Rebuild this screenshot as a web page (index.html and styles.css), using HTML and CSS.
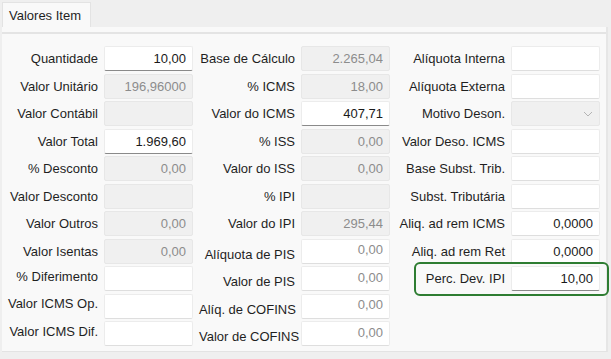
FILE: index.html
```html
<!DOCTYPE html>
<html lang="pt-BR">
  <head>
    <meta charset="UTF-8" />
    <title>Valores Item</title>
    <link rel="stylesheet" href="styles.css">
  </head>
  <body>
    <div class="tabs">
      <div class="tab active">Valores Item</div>
    </div>
    <div class="page">
      <div class="form">
        <div class="col col-1">
          <div class="row"><label>Quantidade</label><input class="field active" value="10,00" readonly></div>
          <div class="row"><label>Valor Unitário</label><input class="field disabled" value="196,96000" readonly></div>
          <div class="row"><label>Valor Contábil</label><input class="field disabled" value="" readonly></div>
          <div class="row"><label>Valor Total</label><input class="field active" value="1.969,60" readonly></div>
          <div class="row"><label>% Desconto</label><input class="field disabled" value="0,00" readonly></div>
          <div class="row"><label>Valor Desconto</label><input class="field disabled" value="" readonly></div>
          <div class="row"><label>Valor Outros</label><input class="field disabled" value="0,00" readonly></div>
          <div class="row"><label>Valor Isentas</label><input class="field disabled" value="0,00" readonly></div>
          <div class="row"><label class="high">% Diferimento</label><input class="field" value="" readonly></div>
          <div class="row"><label class="high">Valor ICMS Op.</label><input class="field" value="" readonly></div>
          <div class="row"><label class="high">Valor ICMS Dif.</label><input class="field" value="" readonly></div>
        </div>

        <div class="col col-2">
          <div class="row"><label>Base de Cálculo</label><input class="field disabled" value="2.265,04" readonly></div>
          <div class="row"><label>% ICMS</label><input class="field disabled" value="18,00" readonly></div>
          <div class="row"><label>Valor do ICMS</label><input class="field active" value="407,71" readonly></div>
          <div class="row"><label>% ISS</label><input class="field disabled" value="0,00" readonly></div>
          <div class="row"><label>Valor do ISS</label><input class="field disabled" value="0,00" readonly></div>
          <div class="row"><label>% IPI</label><input class="field disabled" value="" readonly></div>
          <div class="row"><label>Valor do IPI</label><input class="field disabled" value="295,44" readonly></div>
          <div class="row"><label class="low">Alíquota de PIS</label><input class="field muted" value="0,00" readonly></div>
          <div class="row"><label class="low">Valor de PIS</label><input class="field muted" value="0,00" readonly></div>
          <div class="row"><label class="low">Alíq. de COFINS</label><input class="field muted" value="0,00" readonly></div>
          <div class="row"><label class="low">Valor de COFINS</label><input class="field muted" value="0,00" readonly></div>
        </div>

        <div class="col col-3">
          <div class="row"><label>Alíquota Interna</label><input class="field" value="" readonly></div>
          <div class="row"><label>Alíquota Externa</label><input class="field" value="" readonly></div>
          <div class="row">
            <label>Motivo Deson.</label>
            <div class="field disabled select">
              <svg width="10" height="6" viewBox="0 0 10 6"><path d="M1 1 L5 5 L9 1" fill="none" stroke="#b4b4b4" stroke-width="1"/></svg>
            </div>
          </div>
          <div class="row"><label>Valor Deso. ICMS</label><input class="field" value="" readonly></div>
          <div class="row"><label>Base Subst. Trib.</label><input class="field" value="" readonly></div>
          <div class="row"><label>Subst. Tributária</label><input class="field" value="" readonly></div>
          <div class="row"><label>Aliq. ad rem ICMS</label><input class="field" value="0,0000" readonly></div>
          <div class="row"><label>Aliq. ad rem Ret</label><input class="field" value="0,0000" readonly></div>
          <div class="row highlighted">
            <label>Perc. Dev. IPI</label><input class="field active" value="10,00" readonly>
            <div class="highlight"></div>
          </div>
        </div>
      </div>
    </div>
  </body>
</html>
```

FILE: styles.css
```css
* {
  margin: 0;
  padding: 0;
  box-sizing: border-box;
}
body {
  background-color: #efefef;
  color: #1f1f1f;
  font-family: "Liberation Sans", Arial, sans-serif;
  font-size: 13px;
  width: 611px;
  height: 359px;
  overflow: hidden;
}
.tabs {
  display: flex;
  padding: 2px 0 0 2px;
}
.tab {
  width: 89px;
  height: 25px;
  padding: 5px 0 0 6px;
  background-color: #f9f9f9;
  border: 1px solid #e3e3e3;
  border-bottom: none;
}
.page {
  margin-left: 2px;
  width: 606px;
  height: 325px;
  padding-top: 5px;
  background-color: #f9f9f9;
  border-right: 2px solid #e6e6e6;
  border-bottom: 1px solid #e3e3e3;
}
.form {
  display: flex;
  gap: 6px;
  padding: 12px 0 0 5px;
  border-top: 2px solid #e4e4e4;
}
.col {
  display: flex;
  flex-direction: column;
  gap: 2.5px;
}
.row {
  display: flex;
  align-items: center;
  gap: 6px;
  height: 25px;
  position: relative;
}
.row label {
  text-align: right;
  white-space: nowrap;
}
.col-1 label {
  width: 91px;
}
.col-2 label {
  width: 96px;
}
.col-3 label {
  width: 109px;
}
.row label.low {
  padding-top: 6px;
}
.row label.high {
  padding-bottom: 5px;
}
.field {
  width: 89px;
  height: 25px;
  padding: 0 6px;
  font: inherit;
  text-align: right;
  color: #1a1a1a;
  background-color: #ffffff;
  border: 1px solid #ececec;
  border-bottom-color: #dedede;
  border-radius: 2px;
  outline: none;
}
.field.active {
  border-bottom-color: #8a8a8a;
}
.field.disabled {
  background-color: #f0f0f0;
  color: #8c8c8c;
  border-color: #e7e7e7;
}
.field.muted {
  color: #8c8c8c;
  padding-bottom: 3px;
}
.select {
  display: flex;
  align-items: center;
  justify-content: flex-end;
  padding-right: 6px;
}
.highlight {
  position: absolute;
  top: -4px;
  bottom: -5px;
  left: 18px;
  right: -9px;
  border: 2px solid #2e7d32;
  border-radius: 6px;
  pointer-events: none;
}
```
